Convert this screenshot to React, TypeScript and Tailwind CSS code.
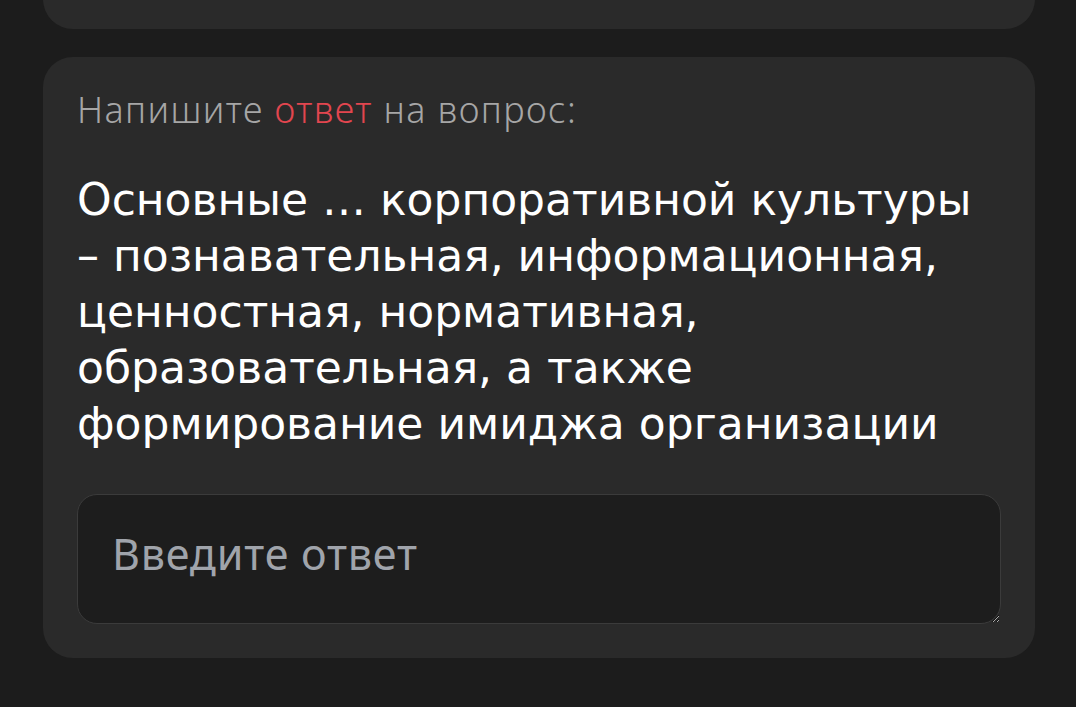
export default function App() {
  return (
    <div className="min-h-[707px] overflow-hidden bg-[#1c1c1c] px-[43px] pr-[41px] font-['Noto_Sans',sans-serif]">
      <div className="flex flex-col gap-[28px]">
        {/* previous question card, scrolled mostly out of view */}
        <div className="-mt-[171px] h-[200px] rounded-[30px] bg-[#2a2a2a]" />

        <div className="rounded-[30px] bg-[#2a2a2a] px-[34px] pt-[31px] pb-[34px]">
          <p className="text-[36px] leading-[44px] font-light tracking-[1.4px] text-[#a6a6a6]">
            Напишите <span className="text-[#e2464f]">ответ</span> на вопрос:
          </p>

          <p className="mt-[40px] font-['DejaVu_Sans',sans-serif] text-[44px] leading-[56px] text-white">
            Основные … корпоративной культуры
            <br />– познавательная, информационная,
            <br />ценностная, нормативная,
            <br />образовательная, а также
            <br />формирование имиджа организации
          </p>

          <textarea
            placeholder="Введите ответ"
            className="mt-[42px] block h-[130px] w-full rounded-[20px] border border-[#3b3b3b] bg-[#1d1d1d] px-[34px] pt-[33px] text-[43px] leading-[52px] tracking-[0.8px] text-white outline-none placeholder:text-[#a0a4ab]"
          />
        </div>
      </div>
    </div>
  );
}
